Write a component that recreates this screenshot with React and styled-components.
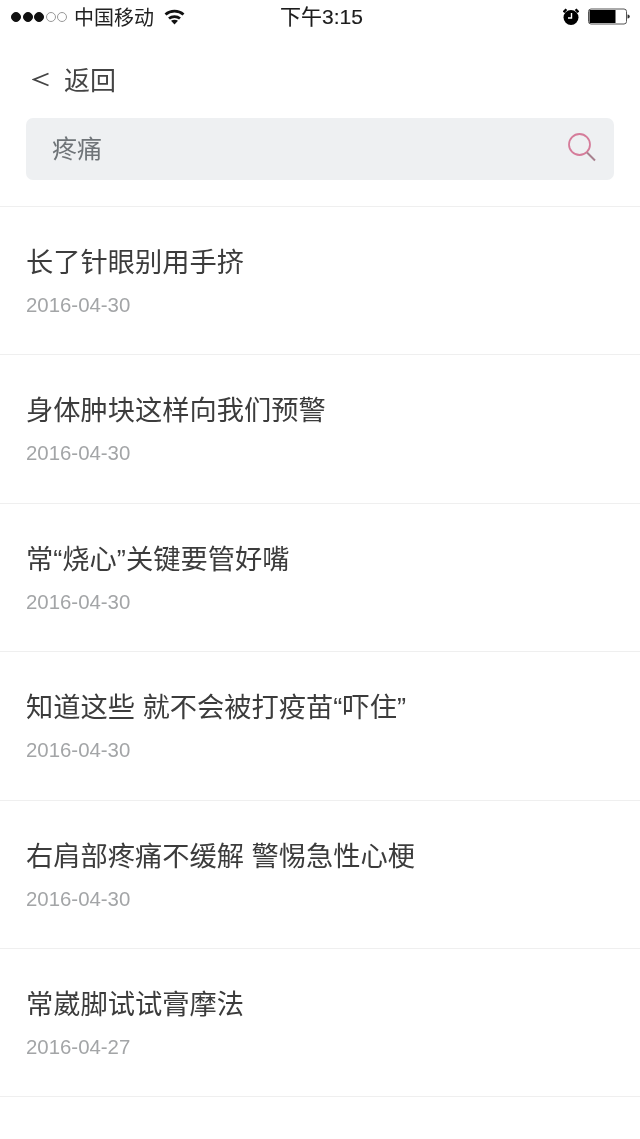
import React from "react";
import styled, { createGlobalStyle } from "styled-components";

const Global = createGlobalStyle`
  html, body { margin: 0; padding: 0; background: #fff; }
  body { font-family: "Liberation Sans", "Noto Sans CJK SC", sans-serif; }
`;
const Page = styled.div`
  width: 640px; height: 1139px; overflow: hidden; background: #fff;
  filter: blur(0.4px);
`;
const StatusBar = styled.div`
  height: 36px; box-sizing: border-box; display: grid; grid-template-columns: 1fr auto 1fr; align-items: center;
  padding: 0 10px 3px 11px; color: #1a1a1a;
`;
const Left = styled.div`display: flex; align-items: center;`;
const Right = styled.div`display: flex; align-items: center; justify-content: flex-end; gap: 9px;`;
const Dot = styled.span`
  width: 10px; height: 10px; box-sizing: border-box; border-radius: 50%; margin-right: 1.6px;
  border: 1px solid ${p => (p.$on ? "#111" : "#999")};
  background: ${p => (p.$on ? "#111" : "transparent")};
`;
const Carrier = styled.span`font-size: 20px; margin: 0 10px 0 5px; color: #222;`;
const Clock = styled.span`
  font-size: 21px; color: #1c1c1c; -webkit-text-stroke: 0.15px #1c1c1c;
  padding: 0 0 3px 2px;
`;
const Nav = styled.div`
  height: 82px; box-sizing: border-box; padding: 2px 26px 0 32px; display: flex; align-items: center; gap: 15px;
  font-size: 26px; color: #444;
`;
const ChevronSlot = styled.span`display: flex; padding-top: 2px;`;
const SearchBox = styled.div`
  margin: 0 26px; height: 62px; border-radius: 7px; background: #eef0f2;
  display: flex; align-items: center; justify-content: space-between;
  padding: 0 17px 0 26px; font-size: 25px; color: #6f7478;
`;
const SearchText = styled.span`padding-bottom: 5px;`;
const SearchIconSlot = styled.span`display: flex; padding-bottom: 5px;`;
const List = styled.div`
  margin-top: 26px; border-top: 1px solid #efefef;
`;
const Row = styled.div`
  height: 147.4px; border-bottom: 1px solid #efefef;
  padding: 0 26px; display: flex; flex-direction: column;
`;
const Title = styled.div`
  margin-top: 38px; height: 36px; line-height: 36px; font-size: 27.25px; color: #3c3c3c; white-space: nowrap;
`;
const Date = styled.div`
  margin-top: 12px; height: 24px; line-height: 24px; font-size: 20.4px; color: #a3a5a7;
`;

const items = [
  ["长了针眼别用手挤", "2016-04-30"],
  ["身体肿块这样向我们预警", "2016-04-30"],
  ["常“烧心”关键要管好嘴", "2016-04-30"],
  ["知道这些 就不会被打疫苗“吓住”", "2016-04-30"],
  ["右肩部疼痛不缓解 警惕急性心梗", "2016-04-30"],
  ["常崴脚试试膏摩法", "2016-04-27"],
];

const Wifi = () => (
  <svg width="21" height="16" viewBox="0 0 21 16" fill="none" stroke="#111" strokeWidth="2.8">
    <path d="M1.5 5.5C6.5 1 14.5 1 19.5 5.5" />
    <path d="M5 9.5C8 7 13 7 16 9.5" />
    <path d="M10.5 15.5 7 11.7c2-1.3 5-1.3 7 0z" fill="#111" stroke="none" />
  </svg>
);
const Alarm = () => (
  <svg width="16" height="17" viewBox="0 0 16 17">
    <circle cx="8" cy="9.5" r="7.5" fill="#000" />
    <path d="M.6 4.2 3.4 1.2M15.4 4.2 12.6 1.2" stroke="#000" strokeWidth="2.4" />
    <path d="M8.5 5V10H5" fill="none" stroke="#fff" strokeWidth="1.4" />
  </svg>
);
const Battery = () => (
  <svg width="42" height="18" viewBox="0 0 42 18">
    <rect x="0.5" y="1" width="38" height="15" rx="2.5" fill="#fff" stroke="#555" />
    <rect x="1.5" y="2" width="26" height="13" fill="#000" />
    <path d="M39.5 6.5c1.8 .4 2.3 1.2 2.3 2s-.5 1.6-2.3 2z" fill="#333" />
  </svg>
);
const Search = () => (
  <svg width="30" height="30" viewBox="0 0 30 30" fill="none" strokeWidth="1.8">
    <circle cx="12.5" cy="12.5" r="10.5" stroke="#d57c9a" />
    <path d="M20 20.5 28 28.5" stroke="#a8808e" strokeWidth="2" />
  </svg>
);
const Chevron = () => (
  <svg width="17" height="15" viewBox="0 0 17 15" fill="none" stroke="#444" strokeWidth="1.8">
    <path d="M16.5 1.5 2 7.5l14.5 6" />
  </svg>
);

export default function App() {
  return (
    <Page>
      <Global />
      <StatusBar>
        <Left>
          <Dot $on /><Dot $on /><Dot $on /><Dot /><Dot />
          <Carrier>中国移动</Carrier>
          <Wifi />
        </Left>
        <Clock>下午3:15</Clock>
        <Right><Alarm /><Battery /></Right>
      </StatusBar>
      <Nav><ChevronSlot><Chevron /></ChevronSlot><span>返回</span></Nav>
      <SearchBox><SearchText>疼痛</SearchText><SearchIconSlot><Search /></SearchIconSlot></SearchBox>
      <List>
        {items.map(([t, d], i) => (
          <Row key={i}><Title>{t}</Title><Date>{d}</Date></Row>
        ))}
      </List>
    </Page>
  );
}
